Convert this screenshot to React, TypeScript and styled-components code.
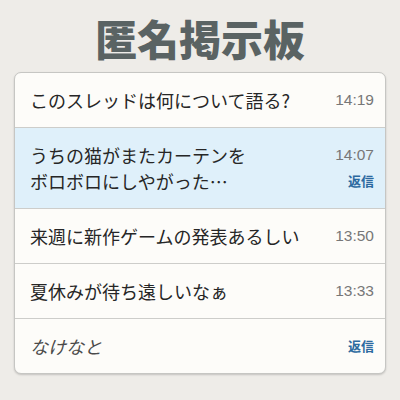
import React from "react";
import styled, { createGlobalStyle } from "styled-components";

const GlobalStyle = createGlobalStyle`
  html, body {
    margin: 0;
    padding: 0;
    background: #eeece8;
  }
  body {
    font-family: "Noto Sans CJK JP", "Noto Sans", sans-serif;
  }
`;

const Page = styled.div`
  width: 400px;
  height: 400px;
  box-sizing: border-box;
  padding: 13px 14px 0;
  display: flex;
  flex-direction: column;
  background: #eeece8;
`;

const Title = styled.h1`
  margin: 0;
  height: 50px;
  line-height: 50px;
  text-align: center;
  font-family: "Noto Sans CJK JP", sans-serif;
  font-weight: 900;
  font-size: 42px;
  color: #5a6363;
`;

const Card = styled.div`
  margin-top: 9px;
  background: #fdfcf9;
  border: 1px solid #c6c6c3;
  border-radius: 7px;
  box-shadow: 0 1px 2px rgba(0, 0, 0, 0.18);
  overflow: hidden;
`;

const Row = styled.div<{ $active?: boolean }>`
  display: flex;
  justify-content: space-between;
  align-items: stretch;
  padding: 14px 11px 14px 15px;
  background: ${(p) => (p.$active ? "#dff0fa" : "transparent")};
  & + & {
    border-top: 1px solid #cdcdca;
  }
`;

const Text = styled.div<{ $muted?: boolean }>`
  font-size: 18px;
  line-height: 26px;
  color: ${(p) => (p.$muted ? "#4a4a4a" : "#262626")};
  font-style: ${(p) => (p.$muted ? "italic" : "normal")};
`;

const Side = styled.div`
  display: flex;
  flex-direction: column;
  justify-content: space-between;
  align-items: flex-end;
`;

const Time = styled.span`
  font-family: "Liberation Sans", Arial, sans-serif;
  font-size: 15.5px;
  line-height: 26px;
  color: #777777;
`;

const Reply = styled.span`
  font-family: "Noto Sans CJK JP", sans-serif;
  font-weight: 700;
  font-size: 13px;
  line-height: 26px;
  color: #2c6aa0;
`;

type Post = {
  text: string[];
  time?: string;
  reply?: boolean;
  active?: boolean;
  muted?: boolean;
};

const posts: Post[] = [
  { text: ["このスレッドは何について語る?"], time: "14:19" },
  {
    text: ["うちの猫がまたカーテンを", "ボロボロにしやがった…"],
    time: "14:07",
    reply: true,
    active: true,
  },
  { text: ["来週に新作ゲームの発表あるしい"], time: "13:50" },
  { text: ["夏休みが待ち遠しいなぁ"], time: "13:33" },
  { text: ["なけなと"], reply: true, muted: true },
];

export default function App() {
  return (
    <>
      <GlobalStyle />
      <Page>
        <Title>匿名掲示板</Title>
        <Card>
          {posts.map((p, i) => (
            <Row key={i} $active={p.active}>
              <Text $muted={p.muted}>
                {p.text.map((line, j) => (
                  <div key={j}>{line}</div>
                ))}
              </Text>
              <Side>
                {p.time && <Time>{p.time}</Time>}
                {p.reply && <Reply>返信</Reply>}
              </Side>
            </Row>
          ))}
        </Card>
      </Page>
    </>
  );
}
